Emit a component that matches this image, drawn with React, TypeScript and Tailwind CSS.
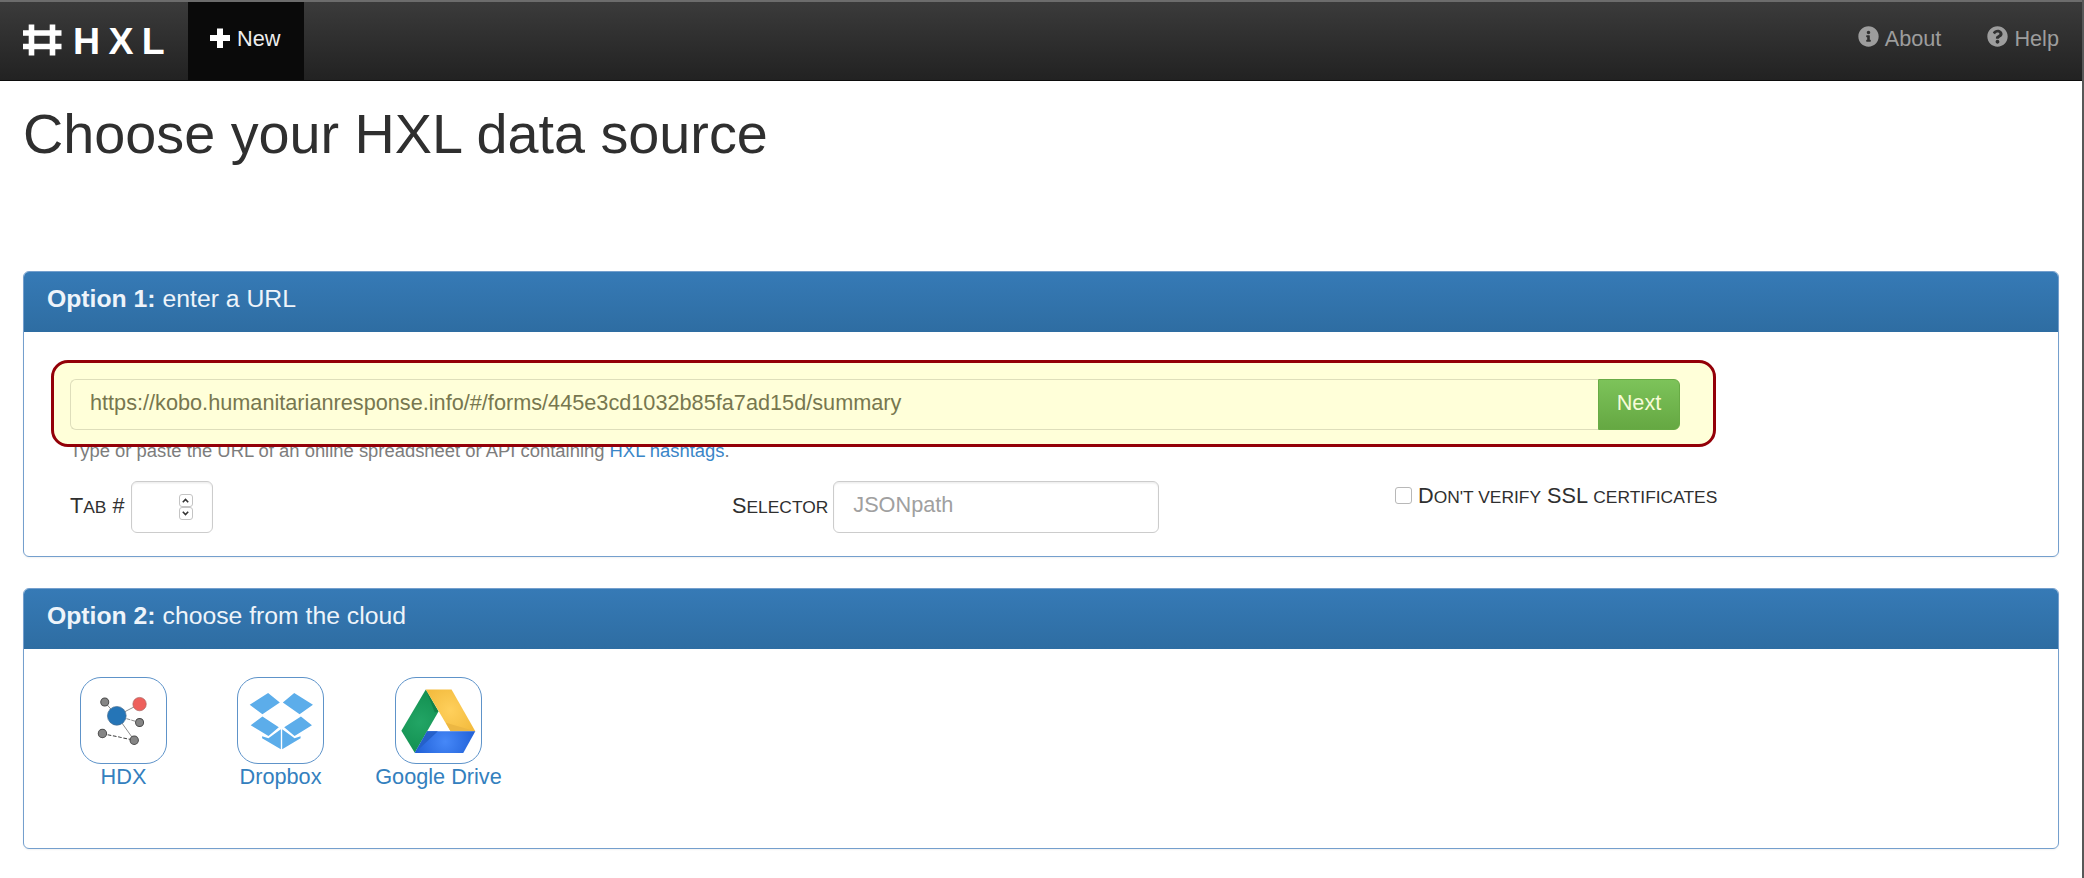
import type { ReactNode } from "react";
import { FaInfoCircle, FaQuestionCircle } from "react-icons/fa";

function HashLogo() {
  return (
    <svg className="h-8 w-10 shrink-0" viewBox="0 0 40 32" stroke="#fff" strokeWidth="5.6" fill="none">
      <path d="M9.5 0.5V31.5M30.5 0.5V31.5M1 9H39.5M1 22.5H39.5" />
    </svg>
  );
}

function PlusIcon() {
  return (
    <svg className="h-5 w-5" viewBox="0 0 20 20" fill="#fff">
      <path d="M7 0.5h6v6.5H20v6h-7V20H7v-7H0V7h7z" />
    </svg>
  );
}

function HdxIcon() {
  return (
    <svg className="h-full w-full" viewBox="3 3 254 254">
      <g stroke="#777" strokeWidth="2.5" fill="none">
        <path d="M110 116L74 75M110 116L178 81M110 116L162 189" />
        <path d="M110 116L178 136" strokeDasharray="12 3" />
        <path d="M67 169L162 189" stroke="#444" strokeWidth="3" strokeDasharray="11 5" />
      </g>
      <g fill="#858585" stroke="#4a4a4a" strokeWidth="3">
        <circle cx="74" cy="75" r="12" />
        <circle cx="178" cy="136" r="12" />
        <circle cx="162" cy="189" r="12.5" />
        <circle cx="67" cy="169" r="12.5" />
      </g>
      <circle cx="110" cy="116" r="28" fill="#2575b7" stroke="#4a6e8e" strokeWidth="2" />
      <circle cx="178" cy="81" r="20" fill="#ee605c" stroke="#a8625f" strokeWidth="2" />
    </svg>
  );
}

function DropboxIcon() {
  return (
    <svg className="h-full w-full" viewBox="3 3 254 254" fill="#5cadea">
      <path d="M93 48L128 76L76 111L38 83ZM171 48L227 83L187 111L137 76Z" />
      <path d="M76 118L125 150L94 176L41 144ZM191 118L224 144L172 176L141 150Z" />
      <path d="M131 156V216L75 183V177L94 183ZM135 156V216L190 183V177L172 183Z" />
    </svg>
  );
}

function DriveIcon() {
  return (
    <svg className="h-full w-full" viewBox="3 3 254 254">
      <defs>
        <radialGradient id="green" gradientUnits="userSpaceOnUse" cx="75" cy="135" r="80">
          <stop offset="0" stopColor="#22a565" />
          <stop offset="1" stopColor="#159354" />
        </radialGradient>
        <radialGradient id="yellow" gradientUnits="userSpaceOnUse" cx="165" cy="100" r="85">
          <stop offset="0" stopColor="#ffd05c" />
          <stop offset="1" stopColor="#f3bb3e" />
        </radialGradient>
        <radialGradient id="blue" gradientUnits="userSpaceOnUse" cx="150" cy="193" r="95">
          <stop offset="0" stopColor="#4688f8" />
          <stop offset="1" stopColor="#1f5fd6" />
        </radialGradient>
      </defs>
      <path d="M92 37L130 103L59 226L19 161Z" fill="url(#green)" />
      <path d="M92 37L130 103L119 106Z" fill="#128149" />
      <path d="M92 37H169L240 162H166Z" fill="url(#yellow)" />
      <path d="M152 137L240 162H166Z" fill="#ecb743" />
      <path d="M96 162H240L204 227H59Z" fill="url(#blue)" />
      <path d="M96 162H128L59 227Z" fill="#2560ca" />
    </svg>
  );
}

function Panel({ title, text, children, bodyClass }: { title: string; text: string; children: ReactNode; bodyClass: string }) {
  return (
    <section className="overflow-hidden rounded-[6px] border border-[#749fcd] shadow-[0_1px_2px_rgba(0,0,0,0.06)]">
      <h2 className="h-[60px] bg-linear-to-b from-[#367ab6] to-[#2e6da2] pl-[23px] text-[24.75px] leading-[53px] text-[#eef4fa]">
        <strong>{title}</strong> {text}
      </h2>
      <div className={bodyClass}>{children}</div>
    </section>
  );
}

function Cloud({ label, children, className }: { label: string; children: ReactNode; className: string }) {
  return (
    <a className={`flex flex-col items-center text-[21.7px] leading-[26px] text-[#3380be] ${className}`}>
      <span className="h-[87px] w-[87px] rounded-[21px] border border-[#5e93c9]">{children}</span>
      <span className="whitespace-nowrap">{label}</span>
    </a>
  );
}

function Chevron({ down }: { down?: boolean }) {
  return (
    <span className="flex h-[13px] w-[14px] items-center justify-center rounded-[3px] border border-[#c4c4c4]">
      <svg className="h-[5px] w-[7px]" viewBox="0 0 7 5" fill="none" stroke="#333" strokeWidth="1.6">
        <path d={down ? "M0.8 0.8L3.5 3.5L6.2 0.8" : "M0.8 4.2L3.5 1.5L6.2 4.2"} />
      </svg>
    </span>
  );
}

const inputBox = "h-[52px] rounded-[6px] border border-[#cccccc] shadow-[inset_0_1.5px_1.5px_rgba(0,0,0,0.07)]";

export default function App() {
  return (
    <div className="flex h-[878px] w-[2084px] overflow-hidden bg-[#585858] font-['Liberation_Sans',Arial,sans-serif] text-[21.7px] text-[#2f2f2f]">
      <div className="w-[2082px] bg-white">
        <nav className="flex h-[81px] border-t-2 border-b border-t-[#6c6c6c] border-b-[#0c0c0c] bg-linear-to-b from-[#3b3b3b] to-[#222]">
          <div className="flex w-[188px] pt-[22px] pl-[22px]">
            <HashLogo />
            <span className="pl-[11px] text-[37.5px] leading-[34px] font-bold tracking-[8.3px] text-white">HXL</span>
          </div>
          <a className="flex w-[116px] gap-[7px] bg-[#0a0a0a] pt-[26px] pl-[22px] text-[#eee]">
            <PlusIcon />
            <span className="leading-[21px]">New</span>
          </a>
          <div className="ml-auto flex gap-[46px] pt-[24px] pr-[23px] text-[#9d9d9d]">
            <a className="flex gap-[6px]">
              <FaInfoCircle className="h-[21px] w-[21px]" />
              <span className="leading-[25px]">About</span>
            </a>
            <a className="flex gap-[6px]">
              <FaQuestionCircle className="h-[21px] w-[21px]" />
              <span className="leading-[25px]">Help</span>
            </a>
          </div>
        </nav>
        <main className="flex flex-col gap-[31px] pr-[23px] pl-[23px]">
          <h1 className="h-[159px] pt-[22px] text-[55.75px] leading-[62px]">Choose your HXL data source</h1>
          <Panel title="Option 1:" text="enter a URL" bodyClass="relative h-[224px] pt-[47px] pl-[46px]">
            <div className="relative z-20 flex h-[51px] w-[1610px]">
              <div className="flex-1 rounded-l-[6px] border border-r-0 border-[#dedebb] pl-[19px] leading-[46px] text-[#77774f]">
                https://kobo.humanitarianresponse.info/#/forms/445e3cd1032b85fa7ad15d/summary
              </div>
              <button className="w-[82px] rounded-r-[6px] border border-[#68ab45] bg-linear-to-b from-[#7dc35a] to-[#65a842] pb-[3px] text-[#f7fbd8]">
                Next
              </button>
            </div>
            <p className="pt-[9px] text-[18.42px] leading-[24px] text-[#7d7d7d]">
              Type or paste the URL of an online spreadsheet or API containing <a className="text-[#3a86c8]">HXL hashtags</a>.
            </p>
            <div className="absolute top-[28px] left-[27px] z-10 h-[87px] w-[1665px] rounded-[17px] border-[3px] border-[#930008] bg-[#ffffd9]" />
            <div className="flex pt-[18px]">
              <div className="flex w-[662px] gap-[6px] leading-[49px]">
                <span>T<span className="text-[17.4px] uppercase">ab</span> #</span>
                <span className={`${inputBox} flex w-[82px] flex-col items-end justify-center pr-[19px]`}>
                  <Chevron />
                  <Chevron down />
                </span>
              </div>
              <div className="flex w-[662px] gap-[5px] leading-[49px]">
                <span>S<span className="text-[17.4px] uppercase">elector</span></span>
                <span className={`${inputBox} w-[326px] pl-[19px] leading-[46px] text-[#a0a0a0]`}>JSONpath</span>
              </div>
              <div className="flex gap-[6px] pt-[3px] pl-[1px] leading-[23px]">
                <span className="mt-[3px] h-[17px] w-[17px] rounded-[3px] border border-[#b8b8b8]" />
                <span className="whitespace-nowrap">
                  D<span className="text-[17.4px] uppercase">on't verify</span> SSL <span className="text-[17.4px] uppercase">certificates</span>
                </span>
              </div>
            </div>
          </Panel>
          <Panel title="Option 2:" text="choose from the cloud" bodyClass="flex h-[199px] pt-[28px] pl-[35px]">
            <Cloud label="HDX" className="w-[129px]"><HdxIcon /></Cloud>
            <Cloud label="Dropbox" className="ml-[28px] w-[129px]"><DropboxIcon /></Cloud>
            <Cloud label="Google Drive" className="ml-[29px] w-[129px]"><DriveIcon /></Cloud>
          </Panel>
        </main>
      </div>
    </div>
  );
}
